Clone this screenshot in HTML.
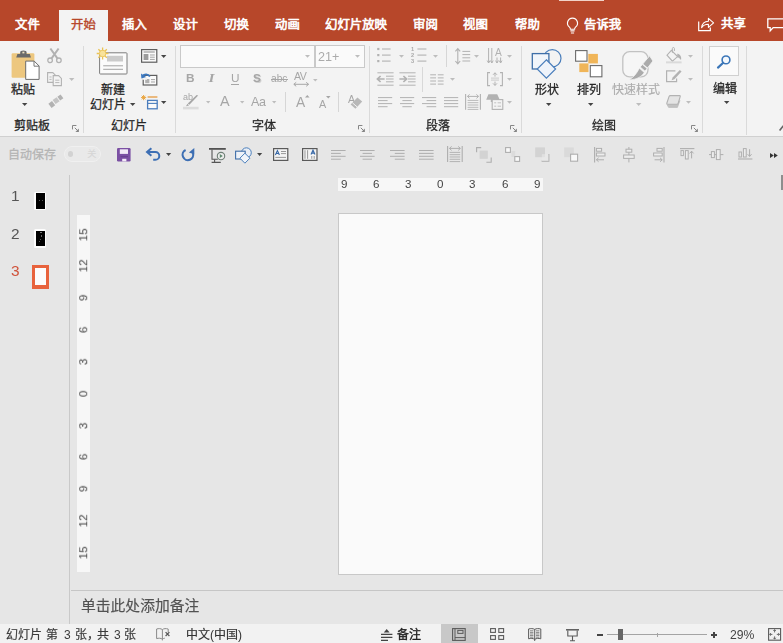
<!DOCTYPE html>
<html lang="zh-CN"><head><meta charset="utf-8"><title>PowerPoint</title>
<style>
html,body{margin:0;padding:0}
body{width:783px;height:643px;overflow:hidden;background:#E6E6E6;font-family:"Liberation Sans",sans-serif;position:relative}
#app{position:absolute;left:0;top:0;width:783px;height:643px;overflow:hidden;background:#E6E6E6}
#app div,#app span,#app svg{position:absolute}
#app section.layer{position:absolute;left:0;top:0;width:783px;height:643px}
#app div{box-sizing:border-box}
.cj,.ic{overflow:visible;display:block}
.cj text{font-family:"Liberation Sans","Noto Sans CJK SC",sans-serif;font-size:1000px}
.tx{white-space:nowrap;line-height:1;display:block;will-change:transform}
</style></head>
<body>
<div id="app">
<section id="tabs" class="layer" aria-label="tab bar">
<div class="bg tabs-bg" style="left:0;top:0;width:783px;height:41px;background:#B7472A">
<div style="left:558.5px;top:0px;width:45px;height:1.3px;background:#F1D3C8"></div>
<div class="tab-active" style="left:59px;top:10px;width:49px;height:31px;background:#F3F3F3"></div>
<svg class="cj" role="img" aria-label="文件" style="left:14.60px;top:17.26px" width="24.80" height="14.88" viewBox="0 -100 2000 1200" fill="#fff" stroke="#fff" stroke-width="52" stroke-linejoin="round"><text x="0" y="880">文件</text></svg>
<svg class="cj" role="img" aria-label="插入" style="left:121.50px;top:17.26px" width="24.80" height="14.88" viewBox="0 -100 2000 1200" fill="#fff" stroke="#fff" stroke-width="52" stroke-linejoin="round"><text x="0" y="880">插入</text></svg>
<svg class="cj" role="img" aria-label="设计" style="left:172.50px;top:17.26px" width="24.80" height="14.88" viewBox="0 -100 2000 1200" fill="#fff" stroke="#fff" stroke-width="52" stroke-linejoin="round"><text x="0" y="880">设计</text></svg>
<svg class="cj" role="img" aria-label="切换" style="left:224.10px;top:17.26px" width="24.80" height="14.88" viewBox="0 -100 2000 1200" fill="#fff" stroke="#fff" stroke-width="52" stroke-linejoin="round"><text x="0" y="880">切换</text></svg>
<svg class="cj" role="img" aria-label="动画" style="left:275.20px;top:17.26px" width="24.80" height="14.88" viewBox="0 -100 2000 1200" fill="#fff" stroke="#fff" stroke-width="52" stroke-linejoin="round"><text x="0" y="880">动画</text></svg>
<svg class="cj" role="img" aria-label="幻灯片放映" style="left:325.30px;top:17.26px" width="62.00" height="14.88" viewBox="0 -100 5000 1200" fill="#fff" stroke="#fff" stroke-width="52" stroke-linejoin="round"><text x="0" y="880">幻灯片放映</text></svg>
<svg class="cj" role="img" aria-label="审阅" style="left:412.80px;top:17.26px" width="24.80" height="14.88" viewBox="0 -100 2000 1200" fill="#fff" stroke="#fff" stroke-width="52" stroke-linejoin="round"><text x="0" y="880">审阅</text></svg>
<svg class="cj" role="img" aria-label="视图" style="left:463.20px;top:17.26px" width="24.80" height="14.88" viewBox="0 -100 2000 1200" fill="#fff" stroke="#fff" stroke-width="52" stroke-linejoin="round"><text x="0" y="880">视图</text></svg>
<svg class="cj" role="img" aria-label="帮助" style="left:514.50px;top:17.26px" width="24.80" height="14.88" viewBox="0 -100 2000 1200" fill="#fff" stroke="#fff" stroke-width="52" stroke-linejoin="round"><text x="0" y="880">帮助</text></svg>
<svg class="cj" role="img" aria-label="告诉我" style="left:583.70px;top:17.26px" width="37.20" height="14.88" viewBox="0 -100 3000 1200" fill="#fff" stroke="#fff" stroke-width="52" stroke-linejoin="round"><text x="0" y="880">告诉我</text></svg>
<svg class="cj" role="img" aria-label="开始" style="left:70.60px;top:17.26px" width="24.80" height="14.88" viewBox="0 -100 2000 1200" fill="#B7472A" stroke="#B7472A" stroke-width="30" stroke-linejoin="round"><text x="0" y="880">开始</text></svg>
<svg class="cj" role="img" aria-label="共享" style="left:721.00px;top:16.36px" width="24.80" height="14.88" viewBox="0 -100 2000 1200" fill="#fff" stroke="#fff" stroke-width="52" stroke-linejoin="round"><text x="0" y="880">共享</text></svg>
<svg class="ic" style="left:566px;top:17px" width="13" height="17.5" viewBox="0 0 13 17.5"><path d="M6.5 1.1a5 5 0 0 0-3 9c.6.6.9 1.3.9 2.1h4.2c0-.8.3-1.5.9-2.1a5 5 0 0 0-3-9z" fill="none" stroke="#fff" stroke-width="1.15"/><path d="M4.4 13.9h4.2M4.9 16h3.2" stroke="#fff" stroke-width="1.1"/></svg>
<svg class="ic" style="left:697.5px;top:17px" width="16.5" height="14.5" viewBox="0 0 16.5 14.5"><path d="M.7 4.6V13.6H12.3V10.4" fill="none" stroke="#fff" stroke-width="1.2"/><path d="M3.6 10.6C4.2 6.4 7 4.4 10.4 4.3V1.4L15.6 5.9 10.4 10.3V7.3C7.6 7.2 5.3 8.200 3.600 10.6Z" fill="none" stroke="#fff" stroke-width="1.1" stroke-linejoin="round"/></svg>
<svg class="ic" style="left:766.5px;top:17.6px" width="17" height="14.5" viewBox="0 0 17 14.5"><path d="M.8 .8H17V9.6H6.2L3.2 12.8V9.6H.8Z" fill="none" stroke="#fff" stroke-width="1.3"/></svg>
</div>
</section>
<section id="ribbon" class="layer" aria-label="ribbon">
<div class="bg ribbon-bg" style="left:0;top:41px;width:783px;height:96px;background:#F3F3F3;border-bottom:1px solid #D0D0D0">
</div>
<div class="gsep" style="left:83.2px;top:46px;width:1px;height:87px;background:#DADADA"></div>
<div class="gsep" style="left:175.1px;top:46px;width:1px;height:87px;background:#DADADA"></div>
<div class="gsep" style="left:369.1px;top:46px;width:1px;height:87px;background:#DADADA"></div>
<div class="gsep" style="left:521.2px;top:46px;width:1px;height:87px;background:#DADADA"></div>
<div class="gsep" style="left:702.1px;top:46px;width:1px;height:87px;background:#DADADA"></div>
<div class="gsep" style="left:746.2px;top:46px;width:1px;height:89px;background:#DADADA"></div>
<svg class="ic" style="left:10.5px;top:50px" width="29" height="30.5" viewBox="0 0 29 30.5"><rect x=".6" y="3.2" width="22.8" height="24.6" rx="1.2" fill="#EDC77F"/><path d="M5.200 7.400L6.400 4H9.200V2.200Q9.200.4 12.400.4Q15.600.4 15.600 2.200V4H18.800L20 7.400Z" fill="#6A6A6A"/><rect x="11.400" y="1.700" width="2" height="1.700" fill="#F1E3C4"/><path d="M14.7 11.100H23.2L28.100 16V29.400H14.7Z" fill="#fff" stroke="#6C6C6C" stroke-width="1"/><path d="M23 11.300V16.200H27.900" fill="none" stroke="#6C6C6C" stroke-width=".9"/></svg>
<svg class="cj" role="img" aria-label="粘贴" style="left:10.70px;top:82.10px" width="24.00" height="14.40" viewBox="0 -100 2000 1200" fill="#262626" stroke="#262626" stroke-width="22" stroke-linejoin="round"><text x="0" y="880">粘贴</text></svg>
<svg class="ic" style="left:21.9px;top:102.9px" width="5.4" height="3" viewBox="0 0 5.4 3"><path d="M0 0H5.4 L2.7 3Z" fill="#444"/></svg>
<svg class="cj" role="img" aria-label="剪贴板" style="left:14.20px;top:118.30px" width="36.00" height="14.40" viewBox="0 -100 3000 1200" fill="#262626" stroke="#262626" stroke-width="22" stroke-linejoin="round"><text x="0" y="880">剪贴板</text></svg>
<svg class="ic" style="left:71.9px;top:124.9px" width="7.2" height="7.2" viewBox="0 0 7.2 7.2"><path d="M.5 4.400V.5H4.400" fill="none" stroke="#858585" stroke-width="1"/><path d="M2.800 2.800L6 6" fill="none" stroke="#858585" stroke-width="1"/><path d="M6.900 3.400V6.900H3.400Z" fill="#858585"/></svg>
<svg class="ic" style="left:47.4px;top:48px" width="15" height="15.4" viewBox="0 0 15 15.4"><path d="M3.400.5L10.6 10.600M11.600.5L4.400 10.600" stroke="#B2B2B2" stroke-width="2" fill="none"/><circle cx="3.100" cy="12.300" r="2.300" fill="none" stroke="#B2B2B2" stroke-width="1.300"/><circle cx="11.900" cy="12.300" r="2.300" fill="none" stroke="#B2B2B2" stroke-width="1.300"/></svg>
<svg class="ic" style="left:47px;top:71.8px" width="15.4" height="14.2" viewBox="0 0 15.4 14.2"><path d="M.6.6H5.800L8.400 3.200V10.400H.6Z" fill="#F3F3F3" stroke="#B2B2B2" stroke-width="1.100"/><path d="M6.200 3.600H11.600L14.400 6.400V13.600H6.200Z" fill="#F3F3F3" stroke="#B2B2B2" stroke-width="1.100"/><path d="M8.200 8.200H12.400M8.200 10.600H12.400M2.400 5H4.600M2.400 7.400H4.600" stroke="#B2B2B2" stroke-width=".9"/></svg>
<svg class="ic" style="left:68.7px;top:77.9px" width="5.4" height="3" viewBox="0 0 5.4 3"><path d="M0 0H5.4 L2.7 3Z" fill="#BDBDBD"/></svg>
<svg class="ic" style="left:48px;top:94px" width="16" height="14.4" viewBox="0 0 16 14.4"><path d="M9.400 2.800L12.600.4 15.400 4.200 12.200 6.600Z" fill="#B2B2B2"/><path d="M4.600 6L8.600 3.200 11.600 7.200 7.600 10Z" fill="#C4C4C4"/><path d="M.4 9.800L4 7 7.200 11.200 3.600 14Z" fill="#B2B2B2"/></svg>
<svg class="ic" style="left:96px;top:47px" width="32" height="28" viewBox="0 0 32 28"><rect x="3.600" y="5.800" width="27.400" height="21.200" rx=".8" fill="#FBFBFB" stroke="#7C7C7C" stroke-width="1"/><rect x="11" y="8.800" width="16" height="5.700" fill="#CBCBCB"/><path d="M7.200 18.800H27M7.200 22.300H27" stroke="#A3A3A3" stroke-width="1"/><g stroke="#EAC253" stroke-width="1.300"><path d="M6.600.6V12.400M.7 6.500H12.500M2.400 2.300L10.800 10.700M10.800 2.300L2.400 10.700"/></g><circle cx="6.600" cy="6.500" r="3.300" fill="#F8E29A" stroke="#EAC253" stroke-width=".8"/></svg>
<svg class="cj" role="img" aria-label="新建" style="left:101.00px;top:82.00px" width="24.00" height="14.40" viewBox="0 -100 2000 1200" fill="#262626" stroke="#262626" stroke-width="22" stroke-linejoin="round"><text x="0" y="880">新建</text></svg>
<svg class="cj" role="img" aria-label="幻灯片" style="left:90.20px;top:96.70px" width="36.00" height="14.40" viewBox="0 -100 3000 1200" fill="#262626" stroke="#262626" stroke-width="22" stroke-linejoin="round"><text x="0" y="880">幻灯片</text></svg>
<svg class="ic" style="left:130.1px;top:102.9px" width="5.4" height="3" viewBox="0 0 5.4 3"><path d="M0 0H5.4 L2.7 3Z" fill="#444"/></svg>
<svg class="cj" role="img" aria-label="幻灯片" style="left:111.10px;top:118.30px" width="36.00" height="14.40" viewBox="0 -100 3000 1200" fill="#262626" stroke="#262626" stroke-width="22" stroke-linejoin="round"><text x="0" y="880">幻灯片</text></svg>
<svg class="ic" style="left:141px;top:49px" width="16.4" height="13.8" viewBox="0 0 16.4 13.8"><rect x=".6" y=".6" width="15.200" height="12.600" fill="#FAFAFA" stroke="#5E5E5E" stroke-width="1.200"/><path d="M2.600 3H13.800" stroke="#8A8A8A" stroke-width="1"/><rect x="2.600" y="5" width="4.800" height="6" fill="#9C9C9C"/><path d="M9 6H13.800M9 8.200H13.800M9 10.400H13.800" stroke="#9A9A9A" stroke-width=".9"/></svg>
<svg class="ic" style="left:161px;top:54.8px" width="5.4" height="3" viewBox="0 0 5.4 3"><path d="M0 0H5.4 L2.7 3Z" fill="#444"/></svg>
<svg class="ic" style="left:141px;top:72.4px" width="16.4" height="13.6" viewBox="0 0 16.4 13.6"><rect x="2.200" y="3.400" width="13.600" height="9.600" fill="#FAFAFA" stroke="#5E5E5E" stroke-width="1.200"/><rect x="4.200" y="7" width="4.200" height="4.200" fill="#B0B0B0"/><path d="M10 7.600H14M10 10H14" stroke="#9A9A9A" stroke-width=".9"/><path d="M1.200 6.200V1.200M1.200 6.200H6" stroke="#F3F3F3" stroke-width="3"/><path d="M8.800 4.600A4.400 4.400 0 0 0 1.400 4.200" fill="none" stroke="#3A77BF" stroke-width="1.600"/><path d="M0 1.400L.4 6.400 5.200 5Z" fill="#3A77BF"/></svg>
<svg class="ic" style="left:140.6px;top:95.3px" width="17" height="14.6" viewBox="0 0 17 14.6"><path d="M6.600 2H16.400" stroke="#E5A04B" stroke-width="1.400"/><rect x="6.600" y="5.400" width="9.600" height="8.400" fill="#FAFAFA" stroke="#4A7DBD" stroke-width="1.300"/><path d="M6.600 8.400H16.200" stroke="#4A7DBD" stroke-width="1.100"/><g stroke="#E9A53F" stroke-width="1"><path d="M2.600 0V5.200M0 2.600H5.200M.8.800L4.400 4.400M4.400.8L.8 4.400"/></g></svg>
<svg class="ic" style="left:161px;top:100.8px" width="5.4" height="3" viewBox="0 0 5.4 3"><path d="M0 0H5.4 L2.7 3Z" fill="#444"/></svg>
<div class="combo" style="left:180px;top:45px;width:135px;height:22.6px;background:#FAFAFA;border:1px solid #C9C9C9"></div>
<div class="combo" style="left:315.3px;top:45px;width:49.7px;height:22.6px;background:#FAFAFA;border:1px solid #C9C9C9"></div>
<svg class="ic" style="left:305.1px;top:55.2px" width="5" height="2.8" viewBox="0 0 5 2.8"><path d="M0 0H5 L2.5 2.8Z" fill="#BDBDBD"/></svg>
<svg class="ic" style="left:355px;top:55.2px" width="5" height="2.8" viewBox="0 0 5 2.8"><path d="M0 0H5 L2.5 2.8Z" fill="#BDBDBD"/></svg>
<span class="tx" style="left:318px;top:50.5px;font-size:12.6px;color:#ABABAB;">21+</span>
<span class="tx" style="left:186.4px;top:73px;font-size:11.8px;color:#A6A6A6;font-weight:bold">B</span>
<span class="tx" style="left:209.2px;top:71.3px;font-size:13.4px;color:#A6A6A6;font-family:'Liberation Serif',serif;font-style:italic;font-weight:bold;transform:scaleX(1.15)">I</span>
<span class="tx" style="left:230.6px;top:73px;font-size:11.8px;color:#A6A6A6;">U</span>
<div style="left:231px;top:84px;width:7.8px;height:1px;background:#A6A6A6"></div>
<span class="tx" style="left:254.4px;top:74.2px;font-size:11.8px;color:#D0D0D0;font-weight:bold">S</span>
<span class="tx" style="left:253.2px;top:73px;font-size:11.8px;color:#A6A6A6;font-weight:bold">S</span>
<span class="tx" style="left:271.4px;top:74.2px;font-size:10.2px;color:#A6A6A6;">abc</span>
<div style="left:270.8px;top:79.1px;width:16.8px;height:1px;background:#A6A6A6"></div>
<span class="tx" style="left:293.6px;top:71.2px;font-size:10.6px;color:#A6A6A6;letter-spacing:-.6px">AV</span>
<svg class="ic" style="left:292.8px;top:81.8px" width="16.4" height="4.6" viewBox="0 0 16.4 4.6"><path d="M1 2.300H15.400M3.200.3L.8 2.300 3.200 4.300M13.200.3L15.600 2.300 13.200 4.300" fill="none" stroke="#A6A6A6" stroke-width="1"/></svg>
<svg class="ic" style="left:313.2px;top:78.6px" width="4.6" height="2.6" viewBox="0 0 4.6 2.6"><path d="M0 0H4.6 L2.3 2.6Z" fill="#BDBDBD"/></svg>
<span class="tx" style="left:183.4px;top:93.4px;font-size:9px;color:#A6A6A6;">ab</span>
<svg class="ic" style="left:183.4px;top:94.6px" width="16.4" height="14.6" viewBox="0 0 16.4 14.6"><path d="M15.200.6L6.400 9.800 4.800 8.400 13.600 0Z" fill="#A6A6A6"/><path d="M4.400 8.800L6 10.400 3 11.200Z" fill="#A6A6A6"/><rect x="0" y="11.800" width="15.600" height="2.600" fill="#DCDCDC"/></svg>
<svg class="ic" style="left:205.6px;top:101.4px" width="4.4" height="2.5" viewBox="0 0 4.4 2.5"><path d="M0 0H4.4 L2.2 2.5Z" fill="#BDBDBD"/></svg>
<span class="tx" style="left:220.2px;top:94.4px;font-size:14.4px;color:#A6A6A6;">A</span>
<svg class="ic" style="left:239.8px;top:101.4px" width="4.4" height="2.5" viewBox="0 0 4.4 2.5"><path d="M0 0H4.4 L2.2 2.5Z" fill="#BDBDBD"/></svg>
<span class="tx" style="left:250.8px;top:96px;font-size:12.6px;color:#A6A6A6;letter-spacing:-.3px">Aa</span>
<svg class="ic" style="left:271.6px;top:101.4px" width="4.4" height="2.5" viewBox="0 0 4.4 2.5"><path d="M0 0H4.4 L2.2 2.5Z" fill="#BDBDBD"/></svg>
<div style="left:285.2px;top:92px;width:1px;height:20px;background:#D6D6D6"></div>
<span class="tx" style="left:296.2px;top:96px;font-size:13.8px;color:#A6A6A6;">A</span>
<svg class="ic" style="left:304.6px;top:95.4px" width="4.6" height="2.6" viewBox="0 0 4.6 2.6"><path d="M0 2.600H4.600L2.300 0Z" fill="#A6A6A6"/></svg>
<span class="tx" style="left:319.2px;top:98.8px;font-size:10.8px;color:#A6A6A6;">A</span>
<svg class="ic" style="left:326.2px;top:95.6px" width="4.6" height="2.6" viewBox="0 0 4.6 2.6"><path d="M0 0H4.6 L2.3 2.6Z" fill="#A6A6A6"/></svg>
<div style="left:338.2px;top:92px;width:1px;height:20px;background:#D6D6D6"></div>
<span class="tx" style="left:347.6px;top:93.8px;font-size:10.5px;color:#A6A6A6;">A</span>
<svg class="ic" style="left:349px;top:97px" width="13.6" height="12.4" viewBox="0 0 13.6 12.4"><path d="M8.400.4L13.200 4.600 6.400 11.800 1.600 7.600Z" fill="#B8B8B8"/><path d="M3.400 5.800L8.200 10" stroke="#F3F3F3" stroke-width="1"/></svg>
<svg class="cj" role="img" aria-label="字体" style="left:252.00px;top:118.30px" width="24.00" height="14.40" viewBox="0 -100 2000 1200" fill="#262626" stroke="#262626" stroke-width="22" stroke-linejoin="round"><text x="0" y="880">字体</text></svg>
<svg class="ic" style="left:357.8px;top:124.9px" width="7.2" height="7.2" viewBox="0 0 7.2 7.2"><path d="M.5 4.400V.5H4.400" fill="none" stroke="#858585" stroke-width="1"/><path d="M2.800 2.800L6 6" fill="none" stroke="#858585" stroke-width="1"/><path d="M6.900 3.400V6.900H3.400Z" fill="#858585"/></svg>
<svg class="ic" style="left:377.4px;top:47.4px" width="14" height="16" viewBox="0 0 14 16"><rect x=".2" y="0.9" width="2.200" height="2.200" fill="#B2B2B2"/><path d="M5 2H13.600" stroke="#B2B2B2" stroke-width="1.100"/><rect x=".2" y="7" width="2.200" height="2.200" fill="#B2B2B2"/><path d="M5 8.1H13.600" stroke="#B2B2B2" stroke-width="1.100"/><rect x=".2" y="13" width="2.200" height="2.200" fill="#B2B2B2"/><path d="M5 14.1H13.600" stroke="#B2B2B2" stroke-width="1.100"/></svg>
<svg class="ic" style="left:398.9px;top:55.2px" width="5" height="2.8" viewBox="0 0 5 2.8"><path d="M0 0H5 L2.5 2.8Z" fill="#BDBDBD"/></svg>
<svg class="ic" style="left:411.6px;top:47.4px" width="14.6" height="16" viewBox="0 0 14.6 16"><path d="M5.400 2H14.400" stroke="#B2B2B2" stroke-width="1.100"/><path d="M5.400 8.1H14.400" stroke="#B2B2B2" stroke-width="1.100"/><path d="M5.400 14.1H14.400" stroke="#B2B2B2" stroke-width="1.100"/></svg>
<span class="tx" style="left:411.4px;top:46.8px;font-size:5.6px;color:#A8A8A8;font-weight:bold">1</span>
<span class="tx" style="left:411.4px;top:52.9px;font-size:5.6px;color:#A8A8A8;font-weight:bold">2</span>
<span class="tx" style="left:411.4px;top:58.9px;font-size:5.6px;color:#A8A8A8;font-weight:bold">3</span>
<svg class="ic" style="left:433px;top:55.2px" width="5" height="2.8" viewBox="0 0 5 2.8"><path d="M0 0H5 L2.5 2.8Z" fill="#BDBDBD"/></svg>
<div style="left:446px;top:45px;width:1px;height:22px;background:#D6D6D6"></div>
<svg class="ic" style="left:455px;top:47.6px" width="15.4" height="16.4" viewBox="0 0 15.4 16.4"><path d="M2.800.8V15.600M.4 3.400L2.800.6 5.200 3.400M.4 13L2.800 15.800 5.200 13" fill="none" stroke="#B2B2B2" stroke-width="1.100"/><path d="M7.4 3.4H15.2" stroke="#B2B2B2" stroke-width="1"/><path d="M7.4 6.6H15.2" stroke="#B2B2B2" stroke-width="1"/><path d="M7.4 9.8H15.2" stroke="#B2B2B2" stroke-width="1"/><path d="M7.4 13H15.2" stroke="#B2B2B2" stroke-width="1"/></svg>
<svg class="ic" style="left:474.2px;top:55.2px" width="5" height="2.8" viewBox="0 0 5 2.8"><path d="M0 0H5 L2.5 2.8Z" fill="#BDBDBD"/></svg>
<svg class="ic" style="left:486.6px;top:48px" width="15.6" height="16" viewBox="0 0 15.6 16"><path d="M1.600 0V15M4.800 0V15M.2 12.600L1.600 15 3 12.600M3.400 12.600L4.800 15 6.200 12.600M10 9.500V15M13.600 9.500V15M8.600 12.600L10 15 11.400 12.600M12.200 12.600L13.600 15 15 12.600" fill="none" stroke="#B2B2B2" stroke-width="1"/></svg>
<span class="tx" style="left:495.4px;top:48.1px;font-size:10.2px;color:#B2B2B2;">A</span>
<svg class="ic" style="left:507.1px;top:55.2px" width="5" height="2.8" viewBox="0 0 5 2.8"><path d="M0 0H5 L2.5 2.8Z" fill="#BDBDBD"/></svg>
<svg class="ic" style="left:376.6px;top:71.9px" width="16.4" height="14" viewBox="0 0 16.4 14"><path d="M.4 7H7.600M3.600 4L.4 7 3.600 10" fill="none" stroke="#B2B2B2" stroke-width="1.700"/><path d="M0.4 0.8H16.6" stroke="#B2B2B2" stroke-width="1"/><path d="M9 4.2H16.6" stroke="#B2B2B2" stroke-width="1"/><path d="M9 7H16.6" stroke="#B2B2B2" stroke-width="1"/><path d="M9 9.8H16.6" stroke="#B2B2B2" stroke-width="1"/><path d="M0.4 13.2H16.6" stroke="#B2B2B2" stroke-width="1"/></svg>
<svg class="ic" style="left:398.5px;top:71.9px" width="16.4" height="14" viewBox="0 0 16.4 14"><path d="M.4 7H7.600M4.400 4L7.600 7 4.400 10" fill="none" stroke="#B2B2B2" stroke-width="1.700"/><path d="M0.4 0.8H16.6" stroke="#B2B2B2" stroke-width="1"/><path d="M9 4.2H16.6" stroke="#B2B2B2" stroke-width="1"/><path d="M9 7H16.6" stroke="#B2B2B2" stroke-width="1"/><path d="M9 9.8H16.6" stroke="#B2B2B2" stroke-width="1"/><path d="M0.4 13.2H16.6" stroke="#B2B2B2" stroke-width="1"/></svg>
<div style="left:422px;top:67px;width:1px;height:25px;background:#D8D8D8"></div>
<svg class="ic" style="left:430.4px;top:74.1px" width="14" height="11" viewBox="0 0 14 11"><path d="M0.2 0.8H6" stroke="#B2B2B2" stroke-width="1"/><path d="M0.2 3.9H6" stroke="#B2B2B2" stroke-width="1"/><path d="M0.2 7H6" stroke="#B2B2B2" stroke-width="1"/><path d="M0.2 10.1H6" stroke="#B2B2B2" stroke-width="1"/><path d="M7.8 0.8H13.6" stroke="#B2B2B2" stroke-width="1"/><path d="M7.8 3.9H13.6" stroke="#B2B2B2" stroke-width="1"/><path d="M7.8 7H13.6" stroke="#B2B2B2" stroke-width="1"/><path d="M7.8 10.1H13.6" stroke="#B2B2B2" stroke-width="1"/></svg>
<svg class="ic" style="left:449.7px;top:77.6px" width="5" height="2.8" viewBox="0 0 5 2.8"><path d="M0 0H5 L2.5 2.8Z" fill="#BDBDBD"/></svg>
<svg class="ic" style="left:487px;top:71.8px" width="16" height="14.2" viewBox="0 0 16 14.2"><path d="M3 .6H.6V13.600H3M13 .6H15.400V13.600H13" fill="none" stroke="#B2B2B2" stroke-width="1.100"/><path d="M8 .8V4.600M6 2.800L8 .8 10 2.800M8 13.400V9.600M6 11.400L8 13.400 10 11.400" fill="none" stroke="#B2B2B2" stroke-width="1"/><path d="M4 6.1H12" stroke="#C6C6C6" stroke-width="0.9"/><path d="M4 8.1H12" stroke="#C6C6C6" stroke-width="0.9"/></svg>
<svg class="ic" style="left:507.1px;top:77.6px" width="5" height="2.8" viewBox="0 0 5 2.8"><path d="M0 0H5 L2.5 2.8Z" fill="#BDBDBD"/></svg>
<svg class="ic" style="left:377.6px;top:96.9px" width="14.4" height="10.4" viewBox="0 0 14.4 10.4"><path d="M0 0.6H14.2" stroke="#B2B2B2" stroke-width="1"/><path d="M0 3.6H9.6" stroke="#B2B2B2" stroke-width="1"/><path d="M0 6.6H14.2" stroke="#B2B2B2" stroke-width="1"/><path d="M0 9.7H9.6" stroke="#B2B2B2" stroke-width="1"/></svg>
<svg class="ic" style="left:399.8px;top:96.9px" width="14.4" height="10.4" viewBox="0 0 14.4 10.4"><path d="M0 0.6H14.2" stroke="#B2B2B2" stroke-width="1"/><path d="M2.4 3.6H11.8" stroke="#B2B2B2" stroke-width="1"/><path d="M0 6.6H14.2" stroke="#B2B2B2" stroke-width="1"/><path d="M2.4 9.7H11.8" stroke="#B2B2B2" stroke-width="1"/></svg>
<svg class="ic" style="left:421.8px;top:96.9px" width="14.4" height="10.4" viewBox="0 0 14.4 10.4"><path d="M0 0.6H14.2" stroke="#B2B2B2" stroke-width="1"/><path d="M4.6 3.6H14.2" stroke="#B2B2B2" stroke-width="1"/><path d="M0 6.6H14.2" stroke="#B2B2B2" stroke-width="1"/><path d="M4.6 9.7H14.2" stroke="#B2B2B2" stroke-width="1"/></svg>
<svg class="ic" style="left:443.8px;top:96.9px" width="14.4" height="10.4" viewBox="0 0 14.4 10.4"><path d="M0 0.6H14.2" stroke="#B2B2B2" stroke-width="1"/><path d="M0 3.6H14.2" stroke="#B2B2B2" stroke-width="1"/><path d="M0 6.6H14.2" stroke="#B2B2B2" stroke-width="1"/><path d="M0 9.7H14.2" stroke="#B2B2B2" stroke-width="1"/></svg>
<svg class="ic" style="left:465.2px;top:93.7px" width="16" height="16" viewBox="0 0 16 16"><path d="M.6 0V15.800M15.400 0V15.800" stroke="#B2B2B2" stroke-width="1.100"/><path d="M2.600 2.400H13.400M4.600.4L2.400 2.400 4.600 4.400M11.400.4L13.600 2.400 11.400 4.400" fill="none" stroke="#B2B2B2" stroke-width="1"/><path d="M2.6 6.4H13.4" stroke="#B2B2B2" stroke-width="0.9"/><path d="M2.6 8.7H13.4" stroke="#B2B2B2" stroke-width="0.9"/><path d="M2.6 11H13.4" stroke="#B2B2B2" stroke-width="0.9"/><path d="M2.6 13.3H13.4" stroke="#B2B2B2" stroke-width="0.9"/><path d="M2.6 15.4H13.4" stroke="#B2B2B2" stroke-width="0.9"/></svg>
<svg class="ic" style="left:486.2px;top:94px" width="17.4" height="16" viewBox="0 0 17.4 16"><path d="M.2 5.800L2.400.2H11.200L13.800 5.800H9.200V8H4.800V5.800Z" fill="#B2B2B2"/><rect x="6.200" y="5.600" width="10.600" height="9.800" fill="#F3F3F3" stroke="#B2B2B2" stroke-width="1.100"/><path d="M8.2 8.8H10.2" stroke="#C0C0C0" stroke-width="1"/><path d="M11.6 8.8H15" stroke="#C0C0C0" stroke-width="1"/><path d="M8.2 12.2H10.2" stroke="#C0C0C0" stroke-width="1"/><path d="M11.6 12.2H15" stroke="#C0C0C0" stroke-width="1"/></svg>
<svg class="ic" style="left:507.1px;top:101.1px" width="5" height="2.8" viewBox="0 0 5 2.8"><path d="M0 0H5 L2.5 2.8Z" fill="#BDBDBD"/></svg>
<svg class="cj" role="img" aria-label="段落" style="left:425.60px;top:118.30px" width="24.00" height="14.40" viewBox="0 -100 2000 1200" fill="#262626" stroke="#262626" stroke-width="22" stroke-linejoin="round"><text x="0" y="880">段落</text></svg>
<svg class="ic" style="left:510px;top:124.9px" width="7.2" height="7.2" viewBox="0 0 7.2 7.2"><path d="M.5 4.400V.5H4.400" fill="none" stroke="#858585" stroke-width="1"/><path d="M2.800 2.800L6 6" fill="none" stroke="#858585" stroke-width="1"/><path d="M6.900 3.400V6.900H3.400Z" fill="#858585"/></svg>
<svg class="ic" style="left:531px;top:48px" width="31" height="30.4" viewBox="0 0 31 30.4"><circle cx="21.300" cy="10.300" r="8.700" fill="#F3F3F3" stroke="#4A7EBB" stroke-width="1.200"/><rect x="1.300" y="5.600" width="16.600" height="15.400" fill="#F1F5FA" stroke="#3F6FA8" stroke-width="1.300"/><path d="M15.400 11.800L24.600 21 15.400 30.200 6.200 21Z" fill="#EEF3FA" stroke="#4A7EBB" stroke-width="1.200"/></svg>
<svg class="cj" role="img" aria-label="形状" style="left:534.80px;top:82.10px" width="24.00" height="14.40" viewBox="0 -100 2000 1200" fill="#262626" stroke="#262626" stroke-width="22" stroke-linejoin="round"><text x="0" y="880">形状</text></svg>
<svg class="ic" style="left:546px;top:102.9px" width="5.4" height="3" viewBox="0 0 5.4 3"><path d="M0 0H5.4 L2.7 3Z" fill="#444"/></svg>
<svg class="ic" style="left:575px;top:50px" width="27.6" height="27.4" viewBox="0 0 27.6 27.4"><rect x="13.300" y="3.900" width="9.600" height="9.500" fill="#F0B558"/><rect x="4.300" y="13.400" width="9.200" height="8.700" fill="#F0B558"/><rect x=".6" y=".6" width="11.400" height="10.600" fill="#fff" stroke="#6A6A6A" stroke-width="1.100"/><rect x="15.300" y="15.600" width="11.600" height="11.200" fill="#fff" stroke="#6A6A6A" stroke-width="1.100"/></svg>
<svg class="cj" role="img" aria-label="排列" style="left:576.80px;top:82.10px" width="24.00" height="14.40" viewBox="0 -100 2000 1200" fill="#262626" stroke="#262626" stroke-width="22" stroke-linejoin="round"><text x="0" y="880">排列</text></svg>
<svg class="ic" style="left:588px;top:102.9px" width="5.4" height="3" viewBox="0 0 5.4 3"><path d="M0 0H5.4 L2.7 3Z" fill="#444"/></svg>
<svg class="ic" style="left:622.4px;top:51px" width="30.4" height="29" viewBox="0 0 30.4 29"><rect x=".8" y=".7" width="25.200" height="25.200" rx="6.800" fill="#F6F6F6" stroke="#C2C2C2" stroke-width="1.300"/><path d="M27.600 4.800L31 10 23 20.200 18.200 16Z" fill="#ABABAB" stroke="#F3F3F3" stroke-width=".9"/><path d="M20.600 13.200L25.400 17.200" stroke="#F3F3F3" stroke-width="1.300"/><path d="M17.400 17.200L22.200 21.400C20.400 25 15 28.800 7.200 28.800C11.600 26.400 14.600 22.600 17.400 17.200Z" fill="#ABABAB" stroke="#F3F3F3" stroke-width=".7"/></svg>
<svg class="cj" role="img" aria-label="快速样式" style="left:612.40px;top:82.10px" width="48.00" height="14.40" viewBox="0 -100 4000 1200" fill="#ADADAD" stroke="#ADADAD" stroke-width="14" stroke-linejoin="round"><text x="0" y="880">快速样式</text></svg>
<svg class="ic" style="left:635.8px;top:102.9px" width="5.4" height="3" viewBox="0 0 5.4 3"><path d="M0 0H5.4 L2.7 3Z" fill="#BDBDBD"/></svg>
<svg class="ic" style="left:666.4px;top:47.4px" width="16.6" height="16.4" viewBox="0 0 16.6 16.4"><path d="M5.400 3.400L11.600 9.600 6.400 14.200 1 8.200Z" fill="#F3F3F3" stroke="#B2B2B2" stroke-width="1.100"/><path d="M6.400 5.800V1.400C6.400.2 8.400.2 8.400 1.400V4" fill="none" stroke="#B2B2B2" stroke-width="1"/><path d="M11.400 6.400C14.400 7.400 15.800 10 15 13C13.800 11.200 12.600 10.400 11 10.200Z" fill="#B2B2B2"/><rect x="0" y="14.400" width="15.600" height="2" fill="#DADADA"/></svg>
<svg class="ic" style="left:687.9px;top:55.2px" width="5" height="2.8" viewBox="0 0 5 2.8"><path d="M0 0H5 L2.5 2.8Z" fill="#BDBDBD"/></svg>
<svg class="ic" style="left:665.6px;top:70.2px" width="16.6" height="12.4" viewBox="0 0 16.6 12.4"><path d="M9.400.8H.6V11.600H10.600V8.600" fill="none" stroke="#B2B2B2" stroke-width="1.200"/><path d="M15.600 1.400L8.400 9.200 5.600 10.200 6.600 7.400 13.800 0Z" fill="#B2B2B2"/></svg>
<svg class="ic" style="left:687.9px;top:77.6px" width="5" height="2.8" viewBox="0 0 5 2.8"><path d="M0 0H5 L2.5 2.8Z" fill="#BDBDBD"/></svg>
<svg class="ic" style="left:665.6px;top:95.3px" width="15" height="12.8" viewBox="0 0 15 12.8"><path d="M1 9.400L2.600 12.400H11.400L14 5.400" fill="#C2C2C2" stroke="#BDBDBD" stroke-width=".8"/><path d="M4.400.6H13.600Q14.600.6 14.200 1.600L12.200 8.200Q11.800 9.200 10.800 9.200H1.600Q.4 9.200.8 8.200L3 1.600Q3.400.6 4.400.6Z" fill="#E4E4E4" stroke="#B2B2B2" stroke-width="1.100"/></svg>
<svg class="ic" style="left:685.9px;top:100.7px" width="5" height="2.8" viewBox="0 0 5 2.8"><path d="M0 0H5 L2.5 2.8Z" fill="#BDBDBD"/></svg>
<svg class="cj" role="img" aria-label="绘图" style="left:592.00px;top:118.30px" width="24.00" height="14.40" viewBox="0 -100 2000 1200" fill="#262626" stroke="#262626" stroke-width="22" stroke-linejoin="round"><text x="0" y="880">绘图</text></svg>
<svg class="ic" style="left:691px;top:124.9px" width="7.2" height="7.2" viewBox="0 0 7.2 7.2"><path d="M.5 4.400V.5H4.400" fill="none" stroke="#858585" stroke-width="1"/><path d="M2.800 2.800L6 6" fill="none" stroke="#858585" stroke-width="1"/><path d="M6.900 3.400V6.900H3.400Z" fill="#858585"/></svg>
<div class="btn" style="left:709px;top:46px;width:30px;height:30px;background:#FAFAFA;border:1px solid #D0D0D0"></div>
<svg class="ic" style="left:717.4px;top:54.6px" width="14.6" height="13.4" viewBox="0 0 14.6 13.4"><circle cx="9" cy="4.900" r="3.900" fill="#F4F8FC" stroke="#3B76B8" stroke-width="1.600"/><path d="M6.200 7.800L1 12.600" stroke="#3B76B8" stroke-width="2.200" stroke-linecap="round"/></svg>
<svg class="cj" role="img" aria-label="编辑" style="left:713.10px;top:80.80px" width="24.00" height="14.40" viewBox="0 -100 2000 1200" fill="#262626" stroke="#262626" stroke-width="22" stroke-linejoin="round"><text x="0" y="880">编辑</text></svg>
<svg class="ic" style="left:724px;top:101.2px" width="5.4" height="3" viewBox="0 0 5.4 3"><path d="M0 0H5.4 L2.7 3Z" fill="#444"/></svg>
<svg class="ic" style="left:778.8px;top:124.8px" width="4.4" height="6.2" viewBox="0 0 4.4 6.2"><path d="M.6 5.600L4.400.8" stroke="#666" stroke-width="1.700" fill="none"/></svg>
</section>
<section id="qat" class="layer" aria-label="quick access toolbar">
<div class="bg qat-bg" style="left:0;top:137px;width:783px;height:34px;background:#E6E6E6"></div>
<svg class="cj" role="img" aria-label="自动保存" style="left:8.10px;top:146.50px" width="48.00" height="14.40" viewBox="0 -100 4000 1200" fill="#B4B4B4" stroke="#B4B4B4" stroke-width="22" stroke-linejoin="round"><text x="0" y="880">自动保存</text></svg>
<div class="toggle" style="left:63.5px;top:146px;width:37px;height:15.5px;background:#E9E9E9;border:1px solid #F0F0F0;border-radius:8px"></div>
<div style="left:67.6px;top:150.8px;width:5.6px;height:6.2px;background:#D2D2D2;border-radius:50%"></div>
<svg class="cj" role="img" aria-label="关" style="left:86.60px;top:148.04px" width="9.60" height="11.52" viewBox="0 -100 1000 1200" fill="#D6D6D6"><text x="0" y="880">关</text></svg>
<svg class="ic" style="left:117px;top:148px" width="13.6" height="13.4" viewBox="0 0 13.6 13.4"><path d="M1.2 0H12.4Q13.600 0 13.600 1.200V12.200Q13.600 13.400 12.400 13.400H1.200Q0 13.400 0 12.200V1.200Q0 0 1.200 0Z" fill="#7B50A3"/><rect x="2.800" y="1.300" width="8.200" height="4.600" fill="#F3EAF7"/><rect x="5.200" y="10.800" width="4.200" height="2.600" fill="#F3EAF7"/><rect x="3.600" y="8" width="7.400" height="1.200" fill="#6A4191"/></svg>
<svg class="ic" style="left:145.6px;top:148px" width="15.2" height="12.8" viewBox="0 0 15.2 12.8"><path d="M2 4.600H9.400A3.900 3.900 0 0 1 9.400 12.400H7.200" fill="none" stroke="#3D6FB4" stroke-width="2" transform="translate(0,-.6)"/><path d="M5.400 .2L1 4 5.400 7.800" fill="none" stroke="#3D6FB4" stroke-width="2"/></svg>
<svg class="ic" style="left:166px;top:152.8px" width="5.2" height="3" viewBox="0 0 5.2 3"><path d="M0 0H5.2 L2.6 3Z" fill="#444"/></svg>
<svg class="ic" style="left:180.8px;top:147.8px" width="14.2" height="13" viewBox="0 0 14.2 13"><path d="M4.600 2A5.300 5.300 0 1 0 11.900 5" fill="none" stroke="#3D6FB4" stroke-width="2.100"/><path d="M13.300 .1V6.200L7.900 4.500Z" fill="#3D6FB4"/></svg>
<svg class="ic" style="left:208.6px;top:147.8px" width="16.8" height="15" viewBox="0 0 16.8 15"><path d="M0 .9H16.800" stroke="#4A4A4A" stroke-width="1.700"/><path d="M3 1.600V11.300H8.800" fill="none" stroke="#555" stroke-width="1.100"/><path d="M5.600 11.400V14.300M2.600 14.400H11.800" stroke="#555" stroke-width="1.100"/><circle cx="12" cy="8.100" r="3.700" fill="#EDEDED" stroke="#6F7F76" stroke-width="1.100"/><path d="M10.800 6.100L13.800 8.100 10.800 10.100Z" fill="#5F8A70"/></svg>
<svg class="ic" style="left:234.8px;top:146.6px" width="16.8" height="16.4" viewBox="0 0 16.8 16.4"><circle cx="11.400" cy="5.700" r="4.900" fill="#E9EEF5" stroke="#4A7EBB" stroke-width="1"/><rect x=".6" y="4.200" width="9.600" height="7.800" fill="#EEF2F8" stroke="#3F6FA8" stroke-width="1.100"/><path d="M9.900 6.200L14.900 11.200 9.900 16.200 4.900 11.200Z" fill="#F1F5FA" stroke="#4A7EBB" stroke-width="1"/></svg>
<svg class="ic" style="left:257px;top:152.8px" width="5.2" height="3" viewBox="0 0 5.2 3"><path d="M0 0H5.2 L2.6 3Z" fill="#444"/></svg>
<svg class="ic" style="left:272.8px;top:148px" width="15.4" height="13" viewBox="0 0 15.4 13"><rect x=".6" y=".6" width="14.200" height="11.800" fill="#F4F4F4" stroke="#5A5A5A" stroke-width="1.200"/><path d="M2.400 7L4.400 2.600 6.400 7M3.100 5.500H5.700" fill="none" stroke="#3667A6" stroke-width="1.100"/><path d="M8 3.500H13M8 5.600H13M2.400 9.400H13" stroke="#8D8D8D" stroke-width=".9"/></svg>
<svg class="ic" style="left:301.8px;top:148px" width="15.6" height="13" viewBox="0 0 15.6 13"><rect x=".6" y=".6" width="14.400" height="11.800" fill="#F4F4F4" stroke="#5A5A5A" stroke-width="1.200"/><path d="M9 6.600L11 2.200 13 6.600M9.700 5.100H12.300" fill="none" stroke="#3667A6" stroke-width="1.100"/><path d="M3 2.200V10.800M5.600 2.200V10.800M9.800 8V10.800M12.200 8V10.800" stroke="#8D8D8D" stroke-width=".9"/></svg>
<svg class="ic" style="left:331.3px;top:150.1px" width="14.8" height="10" viewBox="0 0 14.8 10"><path d="M0 0.5H14.6" stroke="#AEAEAE" stroke-width="1"/><path d="M0 3.4H9.8" stroke="#AEAEAE" stroke-width="1"/><path d="M0 6.3H14.6" stroke="#AEAEAE" stroke-width="1"/><path d="M0 9.2H9.8" stroke="#AEAEAE" stroke-width="1"/></svg>
<svg class="ic" style="left:360.3px;top:150.1px" width="14.8" height="10" viewBox="0 0 14.8 10"><path d="M0 0.5H14.6" stroke="#AEAEAE" stroke-width="1"/><path d="M2.6 3.4H12" stroke="#AEAEAE" stroke-width="1"/><path d="M0 6.3H14.6" stroke="#AEAEAE" stroke-width="1"/><path d="M2.6 9.2H12" stroke="#AEAEAE" stroke-width="1"/></svg>
<svg class="ic" style="left:389.5px;top:150.1px" width="14.8" height="10" viewBox="0 0 14.8 10"><path d="M0 0.5H14.6" stroke="#AEAEAE" stroke-width="1"/><path d="M4.8 3.4H14.6" stroke="#AEAEAE" stroke-width="1"/><path d="M0 6.3H14.6" stroke="#AEAEAE" stroke-width="1"/><path d="M4.8 9.2H14.6" stroke="#AEAEAE" stroke-width="1"/></svg>
<svg class="ic" style="left:418.8px;top:150.1px" width="14.8" height="10" viewBox="0 0 14.8 10"><path d="M0 0.5H14.6" stroke="#AEAEAE" stroke-width="1"/><path d="M0 3.4H14.6" stroke="#AEAEAE" stroke-width="1"/><path d="M0 6.3H14.6" stroke="#AEAEAE" stroke-width="1"/><path d="M0 9.2H14.6" stroke="#AEAEAE" stroke-width="1"/></svg>
<svg class="ic" style="left:447.4px;top:146.2px" width="15.8" height="16.2" viewBox="0 0 15.8 16.2"><path d="M.6 0V16M15.200 0V16" stroke="#AEAEAE" stroke-width="1.100"/><path d="M2.600 2.400H13.200M4.600.4L2.400 2.400 4.600 4.400M11.200.4L13.400 2.400 11.200 4.400" fill="none" stroke="#AEAEAE" stroke-width="1"/><path d="M2.6 6.4H13.2" stroke="#AEAEAE" stroke-width="0.9"/><path d="M2.6 8.7H13.2" stroke="#AEAEAE" stroke-width="0.9"/><path d="M2.6 11H13.2" stroke="#AEAEAE" stroke-width="0.9"/><path d="M2.6 13.3H13.2" stroke="#AEAEAE" stroke-width="0.9"/><path d="M2.6 15.6H13.2" stroke="#AEAEAE" stroke-width="0.9"/></svg>
<svg class="ic" style="left:475.6px;top:146.6px" width="15.8" height="15.8" viewBox="0 0 15.8 15.8"><rect x="3.600" y="3.600" width="8.200" height="8.200" fill="#D3D3D3"/><path d="M.6 5.200V.6H5.200M15.200 10.400V15.200H10.400" fill="none" stroke="#AEAEAE" stroke-width="1.100"/></svg>
<svg class="ic" style="left:504.8px;top:147px" width="15.4" height="15" viewBox="0 0 15.4 15"><rect x="6.400" y="4" width="3.800" height="6" fill="#DCDCDC"/><rect x=".6" y=".6" width="4.800" height="4.800" fill="#F9F9F9" stroke="#AEAEAE" stroke-width="1.100"/><rect x="9.800" y="9.600" width="4.800" height="4.800" fill="#F9F9F9" stroke="#AEAEAE" stroke-width="1.100"/></svg>
<svg class="ic" style="left:534.6px;top:147px" width="14.6" height="15" viewBox="0 0 14.6 15"><rect x=".2" y=".4" width="9.800" height="9.800" fill="#D3D3D3"/><path d="M13.800 7V14.200H6.600" fill="none" stroke="#AEAEAE" stroke-width="1.200"/><path d="M6.800 7.200H13.600V14H6.800" fill="#E9E9E9" opacity=".6"/></svg>
<svg class="ic" style="left:564.2px;top:147px" width="14.4" height="15" viewBox="0 0 14.4 15"><rect x=".2" y=".4" width="9.600" height="9.800" fill="#DADADA"/><rect x="6.600" y="7.200" width="7" height="7" fill="#F9F9F9" stroke="#AEAEAE" stroke-width="1.100"/></svg>
<svg class="ic" style="left:594px;top:147.2px" width="11.6" height="15.6" viewBox="0 0 11.6 15.6"><path d="M.6 0V15.400" stroke="#AEAEAE" stroke-width="1.100"/><rect x="2.400" y="1.400" width="5.200" height="2.800" fill="#EDEDED" stroke="#AEAEAE" stroke-width="1"/><rect x="2.400" y="6" width="8.600" height="3" fill="#EDEDED" stroke="#AEAEAE" stroke-width="1"/><path d="M2.400 12.800H10M4.600 10.800L2.400 12.800 4.600 14.800" fill="none" stroke="#AEAEAE" stroke-width="1"/></svg>
<svg class="ic" style="left:622.8px;top:147.2px" width="12" height="15.6" viewBox="0 0 12 15.6"><path d="M5.900 0V15.400" stroke="#AEAEAE" stroke-width="1"/><rect x="3" y="2.200" width="5.800" height="3" fill="#EDEDED" stroke="#AEAEAE" stroke-width="1"/><rect x=".6" y="8" width="10.600" height="3.400" fill="#EDEDED" stroke="#AEAEAE" stroke-width="1"/></svg>
<svg class="ic" style="left:652.6px;top:147.2px" width="11.6" height="15.6" viewBox="0 0 11.6 15.6"><path d="M11 0V15.400" stroke="#AEAEAE" stroke-width="1.100"/><rect x="4" y="1.400" width="5.200" height="2.800" fill="#EDEDED" stroke="#AEAEAE" stroke-width="1"/><rect x=".6" y="6" width="8.600" height="3" fill="#EDEDED" stroke="#AEAEAE" stroke-width="1"/><path d="M1.600 12.800H9.200M7 10.800L9.200 12.800 7 14.800" fill="none" stroke="#AEAEAE" stroke-width="1"/></svg>
<svg class="ic" style="left:679.6px;top:148.2px" width="14.6" height="11.6" viewBox="0 0 14.6 11.6"><path d="M0 .6H14.400" stroke="#AEAEAE" stroke-width="1.100"/><rect x="1" y="2.600" width="2.400" height="5" fill="#EDEDED" stroke="#AEAEAE" stroke-width="1"/><rect x="5.400" y="2.600" width="2.800" height="8.400" fill="#EDEDED" stroke="#AEAEAE" stroke-width="1"/><path d="M11.600 10.400V3.200M9.600 5.400L11.600 3.200 13.600 5.400" fill="none" stroke="#AEAEAE" stroke-width="1"/></svg>
<svg class="ic" style="left:709px;top:148.6px" width="14.4" height="11.2" viewBox="0 0 14.4 11.2"><path d="M0 5.600H14.400" stroke="#AEAEAE" stroke-width="1"/><rect x="2.400" y="2.600" width="3" height="6" fill="#EDEDED" stroke="#AEAEAE" stroke-width="1"/><rect x="7.400" y=".6" width="3.800" height="10" fill="#EDEDED" stroke="#AEAEAE" stroke-width="1"/></svg>
<svg class="ic" style="left:737.6px;top:148.2px" width="14.6" height="11.6" viewBox="0 0 14.6 11.6"><path d="M0 11H14.400" stroke="#AEAEAE" stroke-width="1.100"/><rect x="1" y="4" width="2.400" height="5" fill="#EDEDED" stroke="#AEAEAE" stroke-width="1"/><rect x="5.400" y=".6" width="2.800" height="8.400" fill="#EDEDED" stroke="#AEAEAE" stroke-width="1"/><path d="M11.600 1.200V8.400M9.600 6.200L11.600 8.400 13.600 6.200" fill="none" stroke="#AEAEAE" stroke-width="1"/></svg>
<svg class="ic" style="left:769.8px;top:153.2px" width="8" height="5" viewBox="0 0 8 5"><path d="M0 0L3.800 2.500 0 5ZM4 0L7.800 2.500 4 5Z" fill="#333"/></svg>
</section>
<section id="main" class="layer" aria-label="workspace">
<div id="thumbs" style="left:0;top:171px;width:70px;height:453px;background:#E6E6E6"></div>
<div class="vdiv" style="left:69.3px;top:175px;width:1px;height:449px;background:#C9C9C9"></div>
<span class="tx" style="left:10.7px;top:187.6px;font-size:15.4px;color:#555;">1</span>
<span class="tx" style="left:10.9px;top:225.7px;font-size:15.4px;color:#555;">2</span>
<span class="tx" style="left:11.1px;top:263px;font-size:15.4px;color:#D0523A;">3</span>
<div class="thumb" style="left:34.3px;top:191.6px;width:12.1px;height:18.7px;background:#FDFDFD;border-radius:1.5px"><div style="left:1.6px;top:1.6px;width:9px;height:15.5px;background:#000"><div style="left:3px;top:7px;width:1px;height:1px;background:#5a5a5a"></div><div style="left:6.6px;top:7px;width:1px;height:1px;background:#5a5a5a"></div></div></div>
<div class="thumb" style="left:34.3px;top:229px;width:12.1px;height:18.9px;background:#FDFDFD;border-radius:1.5px"><div style="left:1.6px;top:1.6px;width:9px;height:15.7px;background:#000"><div style="left:4.4px;top:1.8px;width:2px;height:1px;background:#777"></div><div style="left:5px;top:4.8px;width:1px;height:1.6px;background:#666"></div><div style="left:4px;top:8px;width:1px;height:1.4px;background:#555"></div><div style="left:2.8px;top:10px;width:1px;height:1px;background:#555"></div></div></div>
<div class="thumb sel" style="left:31.8px;top:265px;width:17.3px;height:23.7px;background:#E8633D"><div style="left:3.4px;top:3.4px;width:10.6px;height:17px;background:#FCFCFC"></div></div>
<div id="editor" style="left:70px;top:171px;width:713px;height:420px;background:#E6E6E6"></div>
<div class="hruler" style="left:338px;top:177.5px;width:205px;height:13.5px;background:#F7F7F7"></div>
<span class="tx" style="left:341.2px;top:178px;font-size:11.6px;color:#444;">9</span>
<span class="tx" style="left:373.27px;top:178px;font-size:11.6px;color:#444;">6</span>
<span class="tx" style="left:405.34px;top:178px;font-size:11.6px;color:#444;">3</span>
<span class="tx" style="left:437.41px;top:178px;font-size:11.6px;color:#444;">0</span>
<span class="tx" style="left:469.48px;top:178px;font-size:11.6px;color:#444;">3</span>
<span class="tx" style="left:501.55px;top:178px;font-size:11.6px;color:#444;">6</span>
<span class="tx" style="left:533.62px;top:178px;font-size:11.6px;color:#444;">9</span>
<div class="vruler" style="left:76.8px;top:214.6px;width:13.2px;height:357.6px;background:#F7F7F7"></div>
<span class="tx" style="left:72.7px;top:228.5px;width:20px;text-align:center;font-size:11.6px;color:#444;transform:rotate(-90deg)">15</span>
<span class="tx" style="left:72.7px;top:260.35px;width:20px;text-align:center;font-size:11.6px;color:#444;transform:rotate(-90deg)">12</span>
<span class="tx" style="left:72.7px;top:292.2px;width:20px;text-align:center;font-size:11.6px;color:#444;transform:rotate(-90deg)">9</span>
<span class="tx" style="left:72.7px;top:324.05px;width:20px;text-align:center;font-size:11.6px;color:#444;transform:rotate(-90deg)">6</span>
<span class="tx" style="left:72.7px;top:355.9px;width:20px;text-align:center;font-size:11.6px;color:#444;transform:rotate(-90deg)">3</span>
<span class="tx" style="left:72.7px;top:387.75px;width:20px;text-align:center;font-size:11.6px;color:#444;transform:rotate(-90deg)">0</span>
<span class="tx" style="left:72.7px;top:419.6px;width:20px;text-align:center;font-size:11.6px;color:#444;transform:rotate(-90deg)">3</span>
<span class="tx" style="left:72.7px;top:451.45px;width:20px;text-align:center;font-size:11.6px;color:#444;transform:rotate(-90deg)">6</span>
<span class="tx" style="left:72.7px;top:483.3px;width:20px;text-align:center;font-size:11.6px;color:#444;transform:rotate(-90deg)">9</span>
<span class="tx" style="left:72.7px;top:515.15px;width:20px;text-align:center;font-size:11.6px;color:#444;transform:rotate(-90deg)">12</span>
<span class="tx" style="left:72.7px;top:547px;width:20px;text-align:center;font-size:11.6px;color:#444;transform:rotate(-90deg)">15</span>
<div class="slide" style="left:338px;top:213px;width:205px;height:362px;background:#FAFAFA;border:1px solid #C8C8C8"></div>
<div style="left:781.3px;top:175px;width:1.7px;height:15px;background:#8E8E8E"></div>
<div id="notes" style="left:71px;top:590px;width:712px;height:34px;background:#E6E6E6;border-top:1px solid #C6C6C6"></div>
<svg class="cj" role="img" aria-label="单击此处添加备注" style="left:80.80px;top:597.42px" width="118.40" height="17.76" viewBox="0 -100 8000 1200" fill="#525252" stroke="#525252" stroke-width="12" stroke-linejoin="round"><text x="0" y="880">单击此处添加备注</text></svg>
</section>
<section id="status" class="layer" aria-label="status bar">
<div class="bg status-bg" style="left:0;top:624px;width:783px;height:19px;background:#F2F2F2"></div>
<svg class="cj" role="img" aria-label="幻灯片" style="left:5.80px;top:627.30px" width="36.00" height="14.40" viewBox="0 -100 3000 1200" fill="#3c3c3c" stroke="#3c3c3c" stroke-width="16" stroke-linejoin="round"><text x="0" y="880">幻灯片</text></svg>
<svg class="cj" role="img" aria-label="第" style="left:46.30px;top:627.30px" width="12.00" height="14.40" viewBox="0 -100 1000 1200" fill="#3c3c3c" stroke="#3c3c3c" stroke-width="16" stroke-linejoin="round"><text x="0" y="880">第</text></svg>
<span class="tx" style="left:63.5px;top:628.8px;font-size:12px;color:#3c3c3c;">3</span>
<svg class="cj" role="img" aria-label="张" style="left:75.40px;top:627.30px" width="12.00" height="14.40" viewBox="0 -100 1000 1200" fill="#3c3c3c" stroke="#3c3c3c" stroke-width="16" stroke-linejoin="round"><text x="0" y="880">张</text></svg>
<svg class="cj" role="img" aria-label="，" style="left:87.30px;top:627.30px" width="12.00" height="14.40" viewBox="0 -100 1000 1200" fill="#3c3c3c" stroke="#3c3c3c" stroke-width="16" stroke-linejoin="round"><text x="0" y="880">，</text></svg>
<svg class="cj" role="img" aria-label="共" style="left:97.20px;top:627.30px" width="12.00" height="14.40" viewBox="0 -100 1000 1200" fill="#3c3c3c" stroke="#3c3c3c" stroke-width="16" stroke-linejoin="round"><text x="0" y="880">共</text></svg>
<span class="tx" style="left:114.1px;top:628.8px;font-size:12px;color:#3c3c3c;">3</span>
<svg class="cj" role="img" aria-label="张" style="left:124.00px;top:627.30px" width="12.00" height="14.40" viewBox="0 -100 1000 1200" fill="#3c3c3c" stroke="#3c3c3c" stroke-width="16" stroke-linejoin="round"><text x="0" y="880">张</text></svg>
<svg class="ic" style="left:155.6px;top:628.4px" width="14.4" height="12.6" viewBox="0 0 14.4 12.6"><path d="M6.400 1.600C4.800.4 2.600.4.600 1V10.600C2.600 10 4.800 10 6.400 11.200ZM6.400 11.200C7 10.600 7.800 10.400 8.800 10.200M6.400 1.600C7.800.4 10 .4 12.200 1V4.400" fill="none" stroke="#8A8A8A" stroke-width="1"/><path d="M6.400 11.200V12.400" stroke="#8A8A8A" stroke-width="1"/><path d="M9.600 4.200L13.400 8M13.400 4.200L9.600 8" stroke="#555" stroke-width="1.200"/></svg>
<svg class="cj" role="img" aria-label="中文" style="left:186.00px;top:627.30px" width="24.00" height="14.40" viewBox="0 -100 2000 1200" fill="#333" stroke="#333" stroke-width="16" stroke-linejoin="round"><text x="0" y="880">中文</text></svg>
<span class="tx" style="left:210.3px;top:628.5px;font-size:12px;color:#333;">(</span>
<svg class="cj" role="img" aria-label="中国" style="left:214.00px;top:627.30px" width="24.00" height="14.40" viewBox="0 -100 2000 1200" fill="#333" stroke="#333" stroke-width="16" stroke-linejoin="round"><text x="0" y="880">中国</text></svg>
<span class="tx" style="left:238.1px;top:628.5px;font-size:12px;color:#333;">)</span>
<svg class="ic" style="left:380.6px;top:629.4px" width="11.6" height="12" viewBox="0 0 11.6 12"><path d="M5.700 0L8.600 3.400H2.800Z" fill="#444"/><path d="M0 5.400H11.400M0 8.400H11.400M0 11.400H7" stroke="#444" stroke-width="1.100"/></svg>
<svg class="cj" role="img" aria-label="备注" style="left:397.20px;top:626.90px" width="24.00" height="14.40" viewBox="0 -100 2000 1200" fill="#222" stroke="#222" stroke-width="30" stroke-linejoin="round"><text x="0" y="880">备注</text></svg>
<div class="view sel" style="left:440.5px;top:624px;width:37.3px;height:19px;background:#C8C8C8"></div>
<svg class="ic" style="left:452.4px;top:628px" width="13.8" height="13" viewBox="0 0 13.8 13"><rect x=".6" y=".6" width="12.600" height="11.800" fill="none" stroke="#5A5A5A" stroke-width="1.100"/><path d="M3 .6V12.400M3 9.600H13.200" stroke="#5A5A5A" stroke-width="1"/><rect x="5.800" y="2.400" width="5.200" height="3" fill="none" stroke="#5A5A5A" stroke-width="1"/></svg>
<svg class="ic" style="left:490px;top:628.4px" width="14.4" height="12.2" viewBox="0 0 14.4 12.2"><rect x="0.6" y="0.6" width="4.800" height="3.800" fill="none" stroke="#5A5A5A" stroke-width="1.100"/><rect x="0.6" y="7.6" width="4.800" height="3.800" fill="none" stroke="#5A5A5A" stroke-width="1.100"/><rect x="8.8" y="0.6" width="4.800" height="3.800" fill="none" stroke="#5A5A5A" stroke-width="1.100"/><rect x="8.8" y="7.6" width="4.800" height="3.800" fill="none" stroke="#5A5A5A" stroke-width="1.100"/></svg>
<svg class="ic" style="left:528px;top:628.2px" width="13.4" height="13.2" viewBox="0 0 13.4 13.2"><path d="M6.700 1.400C5 .4 2.800.4.600 1V10.800C2.800 10.200 5 10.200 6.700 11.400C8.400 10.200 10.600 10.200 12.800 10.800V1C10.600.4 8.400.4 6.700 1.400ZM6.700 1.400V13" fill="none" stroke="#5A5A5A" stroke-width="1"/><path d="M2 2.800H5.400M2 4.400H5.400M2 6H5.400M2 7.600H5.400M2 9.200H5.400M8 2.800H11.400M8 4.400H11.400M8 6H11.400M8 7.600H11.400M8 9.200H11.400" stroke="#6A6A6A" stroke-width=".8"/></svg>
<svg class="ic" style="left:566.2px;top:629px" width="13" height="12.4" viewBox="0 0 13 12.4"><path d="M0 .8H13" stroke="#5A5A5A" stroke-width="1.500"/><path d="M1.800 1.400V7H11.200V1.400" fill="none" stroke="#5A5A5A" stroke-width="1.100"/><path d="M6.500 7V11.600M4 11.700H9" stroke="#5A5A5A" stroke-width="1.100"/></svg>
<div style="left:597px;top:634.2px;width:5.8px;height:2px;background:#444"></div>
<div style="left:607.3px;top:634.3px;width:100px;height:1px;background:#A4A4A4"></div>
<div style="left:657px;top:632.6px;width:1px;height:4.6px;background:#A4A4A4"></div>
<div style="left:617.9px;top:629px;width:4.9px;height:10.6px;background:#666"></div>
<div style="left:710.8px;top:634.2px;width:6.6px;height:1.8px;background:#444"></div>
<div style="left:713.2px;top:631.8px;width:1.8px;height:6.6px;background:#444"></div>
<span class="tx" style="left:729.5px;top:628.6px;font-size:12.2px;color:#444;">29%</span>
<svg class="ic" style="left:768px;top:628.4px" width="13.2" height="12.8" viewBox="0 0 13.2 12.8"><rect x=".6" y=".6" width="12" height="11.600" fill="none" stroke="#5A5A5A" stroke-width="1.100"/><path d="M6.600 1.800V4.400M5.400 3L6.600 1.600 7.800 3M6.600 11V8.400M5.400 9.800L6.600 11.200 7.800 9.800M1.800 6.400H4.400M3 5.200L1.600 6.400 3 7.600M11.400 6.400H8.800M10.200 5.200L11.600 6.400 10.200 7.600" fill="none" stroke="#5A5A5A" stroke-width=".9"/></svg>
</section>
</div>
</body></html>
